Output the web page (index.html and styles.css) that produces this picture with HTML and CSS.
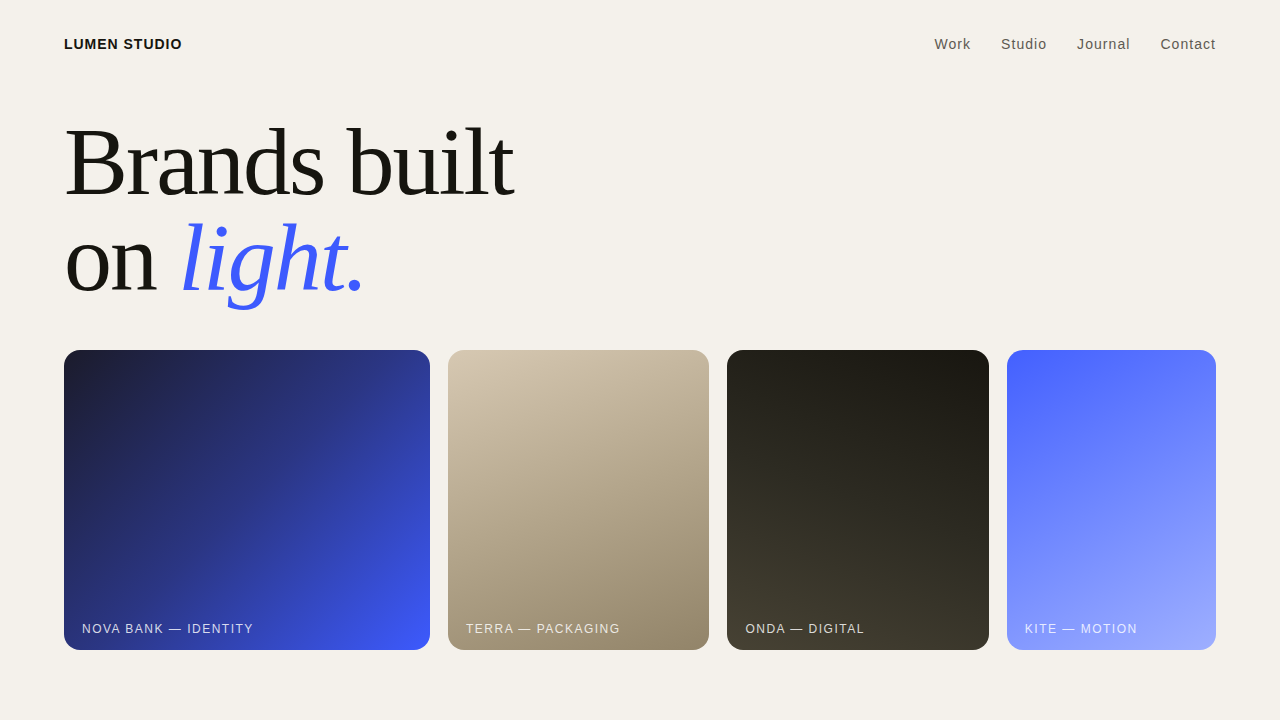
FILE: index.html
```html
<!DOCTYPE html>
<html lang="en">
<head>
<meta charset="utf-8">
<title>Lumen Studio</title>
<link rel="stylesheet" href="styles.css">
</head>
<body>
<div class="page">
  <header class="header">
    <div class="logo">LUMEN STUDIO</div>
    <nav class="nav">
      <a href="#">Work</a>
      <a href="#">Studio</a>
      <a href="#">Journal</a>
      <a href="#">Contact</a>
    </nav>
  </header>
  <h1 class="hero"><span class="line">Brands built</span><span class="line">on <em>light.</em></span></h1>
  <section class="cards">
    <div class="card card-nova"><span class="label">Nova Bank — Identity</span></div>
    <div class="card card-terra"><span class="label">Terra — Packaging</span></div>
    <div class="card card-onda"><span class="label">Onda — Digital</span></div>
    <div class="card card-kite"><span class="label">Kite — Motion</span></div>
  </section>
</div>
</body>
</html>
```
FILE: styles.css
```css
* { box-sizing: border-box; }
html, body { margin: 0; padding: 0; }
body {
  background: #f4f1eb;
  color: #16150f;
  font-family: "Liberation Sans", Arial, sans-serif;
  width: 1280px;
  height: 720px;
  overflow: hidden;
}
.page {
  padding: 0 64px;
}
.header {
  height: 88px;
  display: flex;
  align-items: center;
  justify-content: space-between;
}
.logo {
  font-size: 14px;
  font-weight: 700;
  letter-spacing: 0.07em;
  color: #16150f;
}
.nav {
  display: flex;
  gap: 30px;
}
.nav a {
  font-size: 14px;
  letter-spacing: 0.075em;
  color: #5e5a52;
  text-decoration: none;
}
.hero {
  margin: 26px 0 44px;
  font-family: "Liberation Serif", "Times New Roman", serif;
  font-weight: 400;
  font-size: 96px;
  line-height: 96px;
  letter-spacing: -0.02em;
  color: #16150f;
}
.hero .line {
  display: block;
  height: 96px;
}
.hero em {
  color: #3d5afe;
  font-style: italic;
}
.cards {
  display: grid;
  grid-template-columns: 1.4fr 1fr 1fr 0.8fr;
  gap: 18px;
  height: 300px;
}
.card {
  border-radius: 16px;
  display: flex;
  align-items: flex-end;
  padding: 0 18px 15px;
}
.label {
  font-size: 12px;
  line-height: 12px;
  text-transform: uppercase;
  letter-spacing: 0.125em;
  color: rgba(255, 255, 255, 0.82);
}
.card-nova { background: linear-gradient(135deg, #1b1b2b 0%, #2b3684 50%, #3d5afe 100%); }
.card-terra { background: linear-gradient(160deg, #d6c8b2 0%, #b4a68c 50%, #928469 100%); }
.card-onda { background: linear-gradient(200deg, #181610 0%, #2d2b22 50%, #474234 100%); }
.card-kite { background: linear-gradient(150deg, #4360ff 0%, #7088ff 50%, #9eafff 100%); }
```
